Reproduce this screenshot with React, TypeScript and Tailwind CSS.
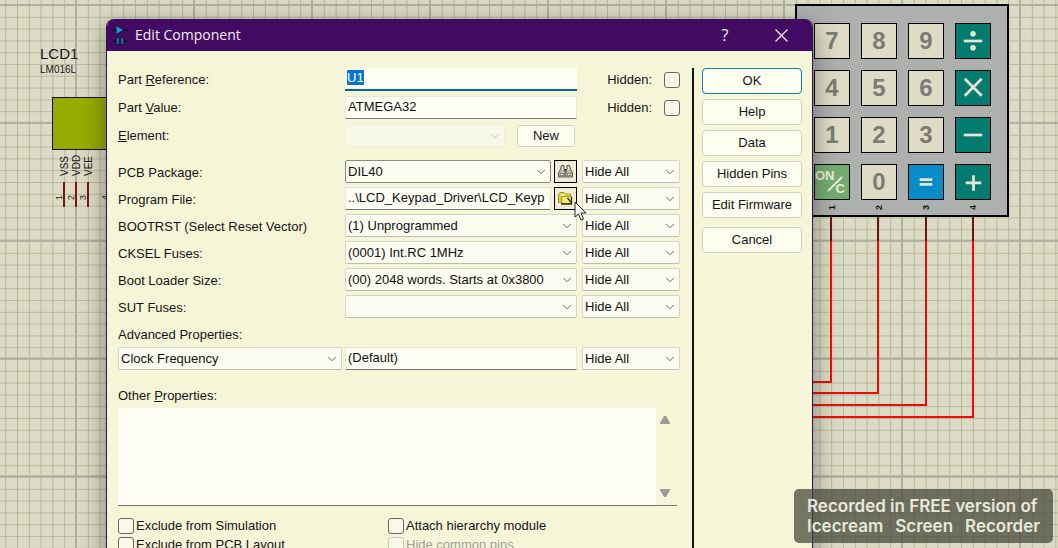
import React, { useEffect, useRef } from "react";
import { ChevronDown } from "lucide-react";

const fieldBase = "block h-[23px] w-full min-w-0 bg-[#fdfdf4] pb-[2px] pl-[2px] text-[#111] outline-none";
const textField = fieldBase + " border border-b-[#777] border-[#e8e8da]";

type DropProps = {
  label: string;
  id?: string;
  value: string;
  strong?: boolean;
  disabled?: boolean;
  className?: string;
};

function Drop({ label, id, value, strong, disabled, className = "w-full" }: DropProps) {
  const look = disabled
    ? "border-[#f0f0da] bg-[#f8f8e6]"
    : strong
      ? "border-[#8a8a8a] bg-[#fcfcf0]"
      : "border-[#d4d4c8] border-b-[#bcbcb8] bg-[#fcfcf0]";
  return (
    <div className={"relative min-w-0 " + className}>
      <select
        id={id}
        aria-label={id ? undefined : label}
        disabled={disabled}
        defaultValue={value}
        className={"block h-[23px] w-full appearance-none rounded-[2px] border pl-[2px] pr-6 text-[#111] outline-none " + look}
      >
        <option>{value}</option>
      </select>
      <ChevronDown
        size={14}
        strokeWidth={1.7}
        className={"pointer-events-none absolute right-[3px] top-[5px] " + (disabled ? "text-[#bdbdb4]" : "text-[#666]")}
      />
    </div>
  );
}

function Binoculars() {
  return (
    <svg width="17" height="17" viewBox="0 0 17 17" aria-hidden="true">
      <path d="M4.500 2.500h2.500v3l1 2v6.500H1.500v-4l2-4zM12.500 2.500H10v3l-1 2v6.500h6.500v-4l-2-4z" fill="#bcbcae" stroke="#5a5a54" />
      <path d="M3 10.500h3.500v2H3zM10.500 10.500H14v2h-3.500z" fill="#f2f2e0" stroke="#6a6a62" strokeWidth=".8" />
      <path d="M5.500 4v3M11.500 4v3" stroke="#f2f2e4" />
      <path d="M7.500 7h2" stroke="#333" strokeWidth="2" />
    </svg>
  );
}

function FolderIcon() {
  return (
    <svg width="17" height="17" viewBox="0 0 17 17" aria-hidden="true">
      <path d="M1.500 12.500v-8l1.500-2h4l1.500 1.500h5v8.500z" fill="#e2d23c" stroke="#9c9230" />
      <path d="M4 6.500h10.500v7h-9.500z" fill="#f4ec6c" stroke="#9c9230" />
      <path d="M10.500 8l4 5v-6M4 14h11" fill="none" stroke="#2b2a18" strokeWidth="1.300" />
      <path d="M3 5h5" stroke="#fffbc0" />
    </svg>
  );
}

function AppIcon() {
  return (
    <svg width="16" height="22" viewBox="0 0 16 22" aria-hidden="true">
      <path d="M0 6h16M1 17h14" stroke="#101828" strokeWidth="2" />
      <path d="M4 1.500l8 4.500-8 4.500z" fill="#2a8fd8" stroke="#0a2238" />
      <path d="M4.500 13.500H7v7H4.500zM9 13.500h2.500v7H9z" fill="#2a80c4" stroke="#0a2238" />
    </svg>
  );
}

const wires = [
  { x: 831, y: 382 },
  { x: 878, y: 393 },
  { x: 926, y: 405 },
  { x: 973, y: 417 },
];

const pins = [
  { x: 64, name: "VSS", no: "1" },
  { x: 76, name: "VDD", no: "2" },
  { x: 88, name: "VEE", no: "3" },
];

function Schematic() {
  return (
    <svg className="absolute inset-0 h-full w-full" aria-hidden="true">
      <defs>
        <pattern id="minor" x="76" y="5" width="11.8" height="11.8" patternUnits="userSpaceOnUse">
          <path d="M0 0H11.8M0 0V11.8" stroke="#aeae90" strokeWidth="1.6" fill="none" />
        </pattern>
        <pattern id="major" x="75" y="4" width="118" height="117.800" patternUnits="userSpaceOnUse">
          <path d="M0 1H118M1 0V118" stroke="#b0b0a2" strokeWidth="2" fill="none" />
        </pattern>
      </defs>
      <rect width="100%" height="100%" fill="#dcdcc6" />
      <rect width="100%" height="100%" fill="url(#minor)" />
      <rect width="100%" height="100%" fill="url(#major)" />
      <g fontFamily="Liberation Sans, sans-serif" fill="#161616">
        <text x="40" y="59" fontSize="15">LCD1</text>
        <text x="40" y="73" fontSize="10">LM016L</text>
        <rect x="52.500" y="97.500" width="90" height="52" fill="#96ad00" stroke="#111" />
        {pins.map((p) => (
          <g key={p.name}>
            <text transform={`translate(${p.x + 4} 176) rotate(-90)`} fontSize="10">{p.name}</text>
            <text transform={`translate(${p.x - 2} 200) rotate(-90)`} fontSize="9">{p.no}</text>
            <path d={`M${p.x} 182V207`} stroke="#7c1410" strokeWidth="2" />
          </g>
        ))}
        <text transform="translate(108 200) rotate(-90)" fontSize="9">4</text>
      </g>
      {wires.map((w) => (
        <g key={w.x} fill="none" strokeWidth="2">
          <path d={`M${w.x} 216V241`} stroke="#74100c" />
          <path d={`M${w.x} 241V${w.y}H800`} stroke="#f00c06" />
        </g>
      ))}
    </svg>
  );
}

const keys = ["7", "8", "9", "÷", "4", "5", "6", "×", "1", "2", "3", "−", "ON/C", "0", "=", "+"];

const glyphs: Record<string, React.ReactNode> = {
  "÷": (
    <>
      <path d="M8 17.500H27" />
      <circle cx="17.500" cy="10" r="1.500" />
      <circle cx="17.500" cy="24.500" r="1.500" />
    </>
  ),
  "×": <path d="M9 8L26.500 25.500M26.500 8L9 25.500" />,
  "−": <path d="M8 17.500H27" />,
  "=": <path d="M11 15H24M11 20H24" />,
  "+": <path d="M10 18.500H26M18 10.500V26.500" />,
};

function Key({ label }: { label: string }) {
  const base = "flex size-9 items-center justify-center border border-black ";
  if (label === "ON/C")
    return (
      <button type="button" aria-label="ON/C" className={base + "relative bg-[#74ac70] text-[13px] font-bold leading-none text-[#eeeed8]"}>
        <span className="absolute left-0 top-1">ON</span>
        <span className="absolute bottom-1 right-1">C</span>
        <svg className="absolute inset-0" width="34" height="34" stroke="#eeeed8" strokeWidth="2" aria-hidden="true">
          <path d="M13 26L27 12" />
        </svg>
      </button>
    );
  if (glyphs[label])
    return (
      <button type="button" aria-label={label} className={base + (label === "=" ? "bg-[#078cc8]" : "bg-[#047b6f]")}>
        <svg width="34" height="34" viewBox="0 0 35 35" fill="none" stroke="#e6e6d4" strokeWidth="2.800" aria-hidden="true">
          {glyphs[label]}
        </svg>
      </button>
    );
  return <button type="button" className={base + "bg-[#dedcc4] text-2xl font-bold text-[#7b7b76]"}>{label}</button>;
}

function Keypad() {
  return (
    <div className="absolute left-[795px] top-[4px] border-2 border-black bg-[#adb0ac] pl-[17px] pr-4 pt-[17px]">
      <div className="grid grid-cols-4 gap-[11px]">
        {keys.map((k) => (
          <Key key={k} label={k} />
        ))}
      </div>
      <div className="grid h-[15px] grid-cols-4 items-center gap-[11px] text-[9px] font-bold leading-none text-[#111]">
        {["1", "2", "3", "4"].map((n) => (
          <span key={n} className="-rotate-90 text-center">{n}</span>
        ))}
      </div>
    </div>
  );
}

function Tick({ id, disabled }: { id: string; disabled?: boolean }) {
  return (
    <input
      id={id}
      type="checkbox"
      disabled={disabled}
      className={"size-4 shrink-0 appearance-none rounded-[3px] border bg-[#f9f9e8] checked:bg-[#0a6cbc] " + (disabled ? "border-[#c9c9c0]" : "border-[#666]")}
    />
  );
}

const fieldRow = "grid h-[23px] grid-cols-[227px_minmax(0,1fr)_98px] items-center";
const propRows = [
  { id: "bootrst", label: "BOOTRST (Select Reset Vector)", value: "(1) Unprogrammed" },
  { id: "cksel", label: "CKSEL Fuses:", value: "(0001) Int.RC 1MHz" },
  { id: "boot", label: "Boot Loader Size:", value: "(00) 2048 words. Starts at 0x3800" },
  { id: "sut", label: "SUT Fuses:", value: "" },
];
const iconButton = "flex size-[23px] shrink-0 items-center justify-center border border-black bg-[#eeedd4]";
const pushButton = "h-[26px] w-full rounded-[4px] border bg-[#fdfdf0] text-center";

export default function App() {
  const reference = useRef<HTMLInputElement>(null);
  useEffect(() => {
    reference.current?.focus();
    reference.current?.select();
  }, []);

  return (
    <main className="relative h-screen overflow-hidden font-['Liberation_Sans',Arial,sans-serif] text-[13px] leading-5 text-[#151515]">
      <Schematic />
      <Keypad />

      <section
        role="dialog"
        aria-label="Edit Component"
        className="absolute left-[106px] top-[19px] flex h-screen w-[707px] flex-col overflow-hidden rounded-t-lg border-x border-[#3c0a5c] bg-[#f5f5d8] shadow-[0_6px_24px_rgba(40,40,30,0.5)]"
      >
        <header className="flex h-8 shrink-0 items-center bg-[#420a62] pl-[5px] pr-6 text-[#f2eef4]">
          <AppIcon />
          <h1 className="ml-[7px] font-['Open_Sans',sans-serif] text-sm">Edit Component</h1>
          <button type="button" aria-label="Help" className="ml-auto w-4 font-['Open_Sans',sans-serif] text-base">?</button>
          <button type="button" aria-label="Close" className="ml-[42px]">
            <svg width="13" height="13" viewBox="0 0 13 13" stroke="#f2eef4" strokeWidth="1.300" aria-hidden="true">
              <path d="M.5.5l12 12M12.500.5l-12 12" />
            </svg>
          </button>
        </header>

        <div className="flex flex-1 pl-[11px] pr-[10px] pt-[17px]">
          <form className="min-w-0 flex-1 pr-3">
            <div className="flex flex-col gap-[5px]">
              <div className={fieldRow}>
                <label htmlFor="ref">Part <u>R</u>eference:</label>
                <div className="pr-[5px]">
                  <input
                    id="ref"
                    ref={reference}
                    defaultValue="U1"
                    className={fieldBase + " border-b-2 border-[#0c639c] selection:bg-[#0a74cc] selection:text-white"}
                  />
                </div>
                <div className="flex items-center justify-end gap-3">
                  <label htmlFor="refHidden">Hidden:</label>
                  <Tick id="refHidden" />
                </div>
              </div>
              <div className={fieldRow}>
                <label htmlFor="val">Part <u>V</u>alue:</label>
                <div className="pr-[5px]">
                  <input id="val" defaultValue="ATMEGA32" className={textField} />
                </div>
                <div className="flex items-center justify-end gap-3">
                  <label htmlFor="valHidden">Hidden:</label>
                  <Tick id="valHidden" />
                </div>
              </div>
              <div className={fieldRow}>
                <label htmlFor="element"><u>E</u>lement:</label>
                <div className="flex items-center justify-between pr-[7px]">
                  <Drop id="element" label="Element" value="" disabled className="w-[160px]" />
                  <button type="button" className="h-[22px] w-[58px] rounded-[3px] border border-[#cfcfc2] bg-[#fdfdf0]">New</button>
                </div>
              </div>
            </div>

            <div className="mt-[13px] flex flex-col gap-1">
              <div className={fieldRow}>
                <label htmlFor="pkg" className="pt-[3px]">PCB Package:</label>
                <div className="flex gap-[3px] pr-[5px]">
                  <Drop id="pkg" label="PCB Package" value="DIL40" strong className="flex-1" />
                  <button type="button" aria-label="Find package" className={iconButton}><Binoculars /></button>
                </div>
                <Drop label="PCB Package visibility" value="Hide All" />
              </div>
              <div className={fieldRow}>
                <label htmlFor="prog" className="pt-[3px]">Program File:</label>
                <div className="flex gap-[3px] pr-[5px]">
                  <input id="prog" defaultValue="..\LCD_Keypad_Driver\LCD_Keyp" className={textField} />
                  <button type="button" aria-label="Browse" className={iconButton}><FolderIcon /></button>
                </div>
                <Drop label="Program File visibility" value="Hide All" />
              </div>
              {propRows.map((r) => (
                <div key={r.id} className={fieldRow}>
                  <label htmlFor={r.id} className="pt-[3px]">{r.label}</label>
                  <div className="pr-[5px]">
                    <Drop id={r.id} label={r.label} value={r.value} />
                  </div>
                  <Drop label={r.label + " visibility"} value="Hide All" />
                </div>
              ))}
            </div>

            <h2 className="mt-[7px]">Advanced Properties:</h2>
            <div className={fieldRow + " mt-[2px]"}>
              <Drop label="Advanced property" value="Clock Frequency" className="mr-[3px]" />
              <div className="pr-[5px]">
                <input aria-label="Advanced property value" defaultValue="(Default)" className={textField} />
              </div>
              <Drop label="Advanced property visibility" value="Hide All" />
            </div>

            <label htmlFor="other" className="mt-4 block">Other <u>P</u>roperties:</label>
            <div className="mr-[3px] mt-[2px] flex h-[98px] border-b border-[#777]">
              <textarea id="other" className="min-w-0 flex-1 resize-none bg-[#fdfdf4] outline-none" />
              <div className="flex w-[21px] flex-col items-center justify-between py-2 pr-[3px]">
                <svg width="10" height="8" viewBox="0 0 10 8" fill="#9a9a90" aria-hidden="true"><path d="M4 0h2l4 7v1H0V7z" /></svg>
                <svg width="10" height="8" viewBox="0 0 10 8" fill="#9a9a98" aria-hidden="true"><path d="M0 0h10v1L6 8H4L0 1z" /></svg>
              </div>
            </div>

            <div className="mt-3 grid grid-cols-[270px_1fr] gap-y-[3px] leading-4">
              <div className="flex items-center gap-[2px]">
                <Tick id="exSim" /><label htmlFor="exSim">Exclude from Simulation</label>
              </div>
              <div className="flex items-center gap-[2px]">
                <Tick id="attach" /><label htmlFor="attach">Attach hierarchy module</label>
              </div>
              <div className="flex items-center gap-[2px]">
                <Tick id="exPcb" /><label htmlFor="exPcb">Exclude from PCB Layout</label>
              </div>
              <div className="flex items-center gap-[2px] text-[#a0a098]">
                <Tick id="pins" disabled /><label htmlFor="pins">Hide common pins</label>
              </div>
            </div>
          </form>

          <div className="flex w-[110px] shrink-0 flex-col gap-[5px] border-l-2 border-[#111] pl-2">
            <button type="button" className={pushButton + " border-[#1a76b0]"}>OK</button>
            <button type="button" className={pushButton + " border-[#d0d0c4]"}>Help</button>
            <button type="button" className={pushButton + " border-[#d0d0c4]"}>Data</button>
            <button type="button" className={pushButton + " border-[#d0d0c4]"}>Hidden Pins</button>
            <button type="button" className={pushButton + " border-[#d0d0c4]"}>Edit Firmware</button>
            <button type="button" className={pushButton + " mt-1 border-[#d0d0c4]"}>Cancel</button>
          </div>
        </div>
      </section>

      <svg className="absolute left-[574px] top-[201px]" width="13" height="20" viewBox="0 0 13 20" aria-hidden="true">
        <path d="M1 1v15l3.500-3 2.500 6 2.500-1-2.500-6H12z" fill="#fff" stroke="#222" />
      </svg>

      <aside className="absolute bottom-[5px] right-[5px] w-[259px] rounded-[5px] bg-[#4a4a3c]/75 px-[13px] py-[7px] font-['Inter',sans-serif] text-[17px] font-semibold leading-5 text-[#e8e8dc]">
        <p className="whitespace-nowrap">Recorded in FREE version of</p>
        <p className="flex justify-between"><span>Icecream</span> <span>Screen</span> <span>Recorder</span></p>
      </aside>
    </main>
  );
}
